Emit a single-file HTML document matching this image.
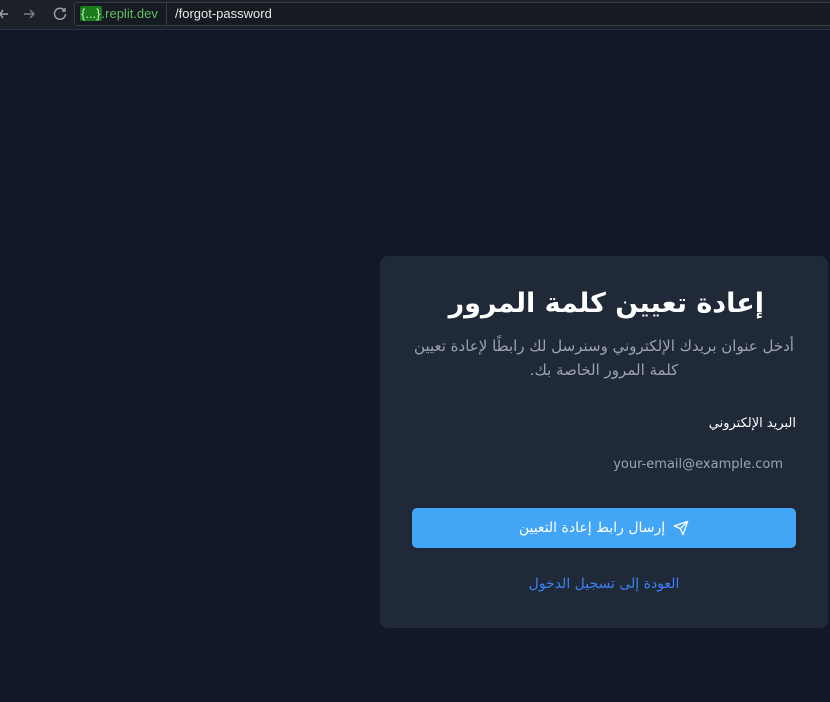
<!DOCTYPE html>
<html><head><meta charset="utf-8"><style>
body{margin:0;width:830px;height:702px;background:#111827;font-family:"Liberation Sans","DejaVu Sans",sans-serif;overflow:hidden;position:relative}
.bar{position:absolute;left:0;top:0;width:830px;height:29px;background:#1c2028;border-bottom:1px solid #2b303a}
.url{position:absolute;left:74px;top:2px;width:760px;height:22px;border:1px solid #353b47;border-radius:3px;background:#161a21}
.dom{position:absolute;left:5px;top:3px;font-size:13px;color:#5fbf5f}
.dom b{font-weight:normal;background:#1d7a1d;color:#bff0bf;border-radius:2px;padding:0 1px}
.sep{position:absolute;left:91px;top:0;width:1px;height:22px;background:#353b47}
.path{position:absolute;left:100px;top:3px;font-size:13px;color:#e8e8e8}
.card{position:absolute;left:380px;top:256px;width:448px;height:372px;background:#1f2937;border-radius:8px}
.t{position:absolute;right:64px;top:32px;font-size:27px;font-weight:bold;color:#fff;direction:rtl;font-family:"DejaVu Sans",sans-serif}
.s{position:absolute;left:30px;right:30px;top:78px;font-size:15px;line-height:24px;color:#9ca3af;text-align:center;direction:rtl;font-family:"DejaVu Sans",sans-serif}
.l{position:absolute;right:32px;top:160px;font-size:13px;color:#fff;direction:rtl;font-family:"DejaVu Sans",sans-serif}
.ph{position:absolute;right:45px;top:201px;font-size:13px;color:#9ca3af;font-family:"DejaVu Sans",sans-serif}
.btn{position:absolute;left:32px;top:252px;width:384px;height:40px;background:#42a5f5;border-radius:5px;color:#fff;font-size:14px;text-align:center;line-height:40px;direction:rtl;font-family:"DejaVu Sans",sans-serif}
.btn svg{vertical-align:middle;margin-left:8px}
.a{position:absolute;left:0;right:0;top:320px;text-align:center;color:#3b82f6;font-size:14px;direction:rtl;font-family:"DejaVu Sans",sans-serif}
</style></head><body>
<div class="bar">
<svg style="position:absolute;left:0;top:6px" width="70" height="16" viewBox="0 0 70 16" fill="none" stroke="#9aa0aa" stroke-width="1.5"><path d="M8 8H0M3 4 0 8 3 12"/><path d="M24 8h10M30 4l4 4-4 4" stroke="#777d87"/><path d="M64 4a5.5 5.5 0 1 0 1.5 4M65 2v3h-3"/></svg>
<div class="url"><span class="dom"><b>{...}</b>.replit.dev</span><div class="sep"></div><span class="path">/forgot-password</span></div>
</div>
<div class="card">
<div class="t">إعادة تعيين كلمة المرور</div>
<div class="s">أدخل عنوان بريدك الإلكتروني وسنرسل لك رابطًا لإعادة تعيين كلمة المرور الخاصة بك.</div>
<div class="l">البريد الإلكتروني</div>
<div class="ph">your-email@example.com</div>
<div class="btn"><svg width="16" height="16" viewBox="0 0 24 24" fill="none" stroke="#fff" stroke-width="2" stroke-linejoin="round"><path d="M22 2 11 13M22 2l-7 20-4-9-9-4z"/></svg>إرسال رابط إعادة التعيين</div>
<div class="a">العودة إلى تسجيل الدخول</div>
</div>
</body></html>
